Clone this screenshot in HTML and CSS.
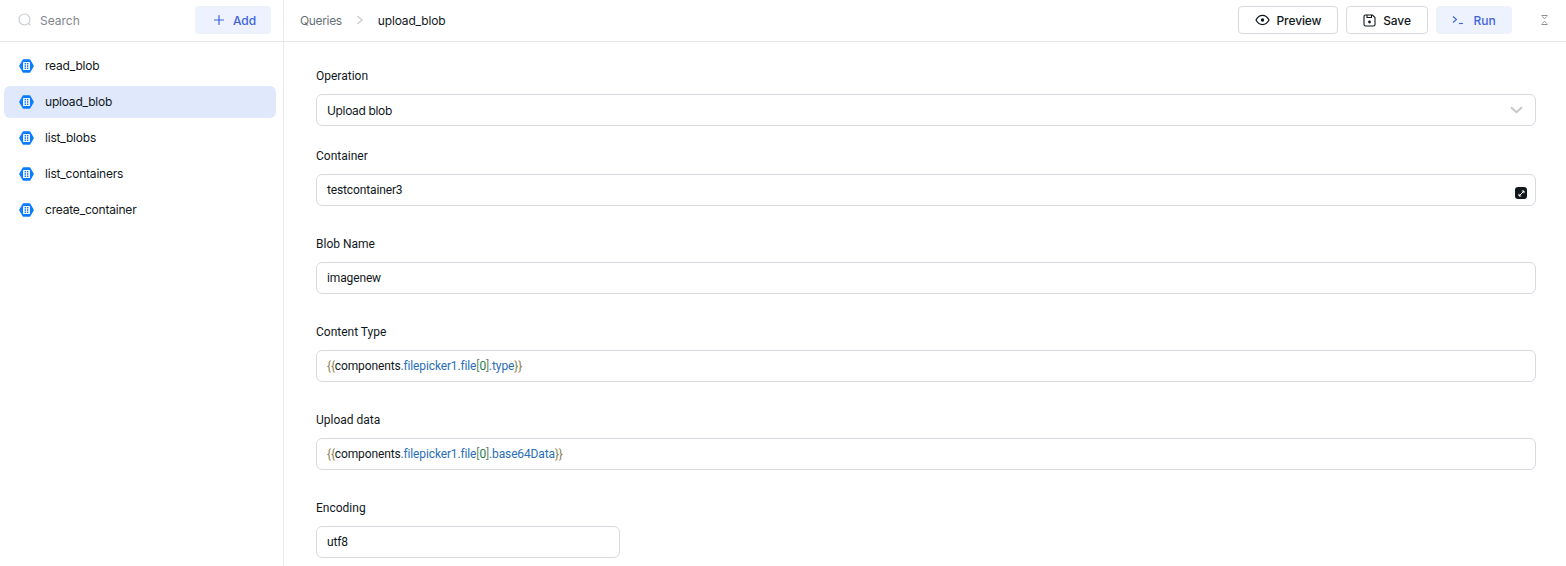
FILE: index.html
```html
<!DOCTYPE html>
<html lang="en">
<head>
<meta charset="utf-8">
<title>upload_blob</title>
<link rel="stylesheet" href="styles.css">
</head>
<body>
<div class="app">
  <aside class="sidebar">
    <div class="side-head">
      <div class="search">
        <svg class="search-icon" width="14" height="14" viewBox="0 0 14 14" fill="none"><circle cx="6.500" cy="6.500" r="5.500" stroke="#c7cdd1" stroke-width="1.200"/><path d="M10.400 10.400l2 2" stroke="#c7cdd1" stroke-width="1.200"/></svg>
        <span>Search</span>
      </div>
      <button class="btn btn-tint btn-add">
        <svg width="12" height="12" viewBox="0 0 12 12" fill="none"><path d="M6 1.500v9M1.500 6h9" stroke="#3e63dd" stroke-width="1.200" stroke-linecap="round"/></svg>
        <span>Add</span>
      </button>
    </div>
    <ul class="query-list">
      <li class="query"><svg class="hex" width="15" height="14" viewBox="0 0 15 14"><use href="#blob"/></svg><span>read_blob</span></li>
      <li class="query active"><svg class="hex" width="15" height="14" viewBox="0 0 15 14"><use href="#blob"/></svg><span>upload_blob</span></li>
      <li class="query"><svg class="hex" width="15" height="14" viewBox="0 0 15 14"><use href="#blob"/></svg><span>list_blobs</span></li>
      <li class="query"><svg class="hex" width="15" height="14" viewBox="0 0 15 14"><use href="#blob"/></svg><span>list_containers</span></li>
      <li class="query"><svg class="hex" width="15" height="14" viewBox="0 0 15 14"><use href="#blob"/></svg><span>create_container</span></li>
    </ul>
  </aside>
  <main class="main">
    <header class="topbar">
      <div class="crumbs">
        <span class="crumb-root">Queries</span>
        <svg width="8" height="10" viewBox="0 0 8 10" fill="none"><path d="M1.500 1l4.500 4-4.500 4" stroke="#c7cdd1" stroke-width="1.200"/></svg>
        <span class="crumb-leaf">upload_blob</span>
      </div>
      <div class="actions">
        <button class="btn btn-outline btn-preview">
          <svg width="15" height="12" viewBox="0 0 15 12" fill="none"><path d="M1 6c1.600-3 3.800-4.600 6.500-4.600S12.400 3 14 6c-1.600 3-3.800 4.600-6.500 4.600S2.600 9 1 6z" stroke="#11181c" stroke-width="1.200"/><circle cx="7.500" cy="6" r="1.700" fill="#11181c"/></svg>
          <span>Preview</span>
        </button>
        <button class="btn btn-outline btn-save">
          <svg width="13" height="13" viewBox="0 0 13 13" fill="none"><path d="M1 2.500A1.500 1.500 0 0 1 2.500 1h7L12 3.500v7a1.500 1.500 0 0 1-1.500 1.500h-8A1.500 1.500 0 0 1 1 10.500z" stroke="#11181c" stroke-width="1.100"/><path d="M4 1v2.500h4.500V1" stroke="#11181c" stroke-width="1.100"/><circle cx="6.500" cy="8" r="1.400" fill="#11181c"/></svg>
          <span>Save</span>
        </button>
        <button class="btn btn-tint btn-run">
          <svg width="12" height="10" viewBox="0 0 12 10" fill="none"><path d="M1 1.500L4.500 4.500 1 7.500" stroke="#3e63dd" stroke-width="1.100"/><path d="M7 8.500h4" stroke="#3e63dd" stroke-width="1.100"/></svg>
          <span>Run</span>
        </button>
        <svg class="collapse" width="7" height="10" viewBox="0 0 7 10" fill="none"><path d="M0.500 0.500h6M1.200 1.500l2.300 2.300 2.300-2.300M0.500 9.500h6M1.200 8.500l2.300-2.300 2.300 2.300" stroke="#889096" stroke-width="1"/></svg>
      </div>
    </header>
    <section class="form">
      <div class="field">
        <label class="label">Operation</label>
        <div class="input select"><span>Upload blob</span><svg width="13" height="8" viewBox="0 0 13 8" fill="none"><path d="M1 1.200L6.500 6.200 12 1.200" stroke="#c4c8cb" stroke-width="2"/></svg></div>
      </div>
      <div class="field field-tight">
        <label class="label">Container</label>
        <div class="input code">testcontainer3<span class="fx"><svg width="7" height="7" viewBox="0 0 7 7" fill="none"><path d="M1 6l5-5M3.800 1H6v2.200M1 3.800V6h2.200" stroke="#fff" stroke-width="1"/></svg></span></div>
      </div>
      <div class="field">
        <label class="label">Blob Name</label>
        <div class="input code">imagenew</div>
      </div>
      <div class="field">
        <label class="label">Content Type</label>
        <div class="input code"><span class="br1">{{</span>components<span class="prop">.filepicker1.file</span><span class="br2">[</span><span class="num">0</span><span class="br2">]</span><span class="prop">.type</span><span class="br1">}}</span></div>
      </div>
      <div class="field">
        <label class="label">Upload data</label>
        <div class="input code"><span class="br1">{{</span>components<span class="prop">.filepicker1.file</span><span class="br2">[</span><span class="num">0</span><span class="br2">]</span><span class="prop">.base64Data</span><span class="br1">}}</span></div>
      </div>
      <div class="field">
        <label class="label">Encoding</label>
        <div class="input code short">utf8</div>
      </div>
    </section>
  </main>
</div>
<svg class="defs" width="0" height="0">
  <symbol id="blob" viewBox="0 0 15 14">
    <path d="M4.500 1h6L14 7l-3.500 6h-6L1 7z" fill="#0a7cff" stroke="#0a7cff" stroke-width="1.600" stroke-linejoin="round"/>
    <rect x="4" y="3" width="7" height="8" rx="0.500" fill="#fff"/>
    <path d="M5.600 4h1.400v1.400H5.600zM8 4h1.400v1.400H8zM5.600 6.300h1.400v1.400H5.600zM8 6.300h1.400v1.400H8zM5.600 8.600h1.400v1.400H5.600zM8 8.600h1.400v1.400H8z" fill="#0a7cff"/>
  </symbol>
</svg>
</body>
</html>
```
FILE: styles.css
```css
* { box-sizing: border-box; }
html, body { margin: 0; height: 100%; overflow: hidden; background: #fff; }
body { font-family: "Inter", "Noto Sans", sans-serif; font-size: 12px; color: #11181c; }
.defs { position: absolute; }
.app { display: flex; height: 566px; }
.sidebar { width: 284px; flex: none; border-right: 1px solid #e6e8eb; }
.side-head { height: 42px; border-bottom: 1px solid #e6e8eb; display: flex; align-items: flex-start; justify-content: space-between; padding: 6px 12px 0 18px; }
.search { display: flex; align-items: center; gap: 8px; height: 28px; color: #7e868c; }
.btn { font: inherit; font-weight: 500; border-radius: 4px; height: 28px; display: flex; align-items: center; justify-content: center; padding: 0; cursor: pointer; }
.btn-tint { background: #edf2fe; border: 0; color: #3e63dd; }
.btn-outline { background: #fff; border: 1px solid #d7dbdf; color: #11181c; }
.btn-add { width: 76px; gap: 8px; padding-left: 3px; letter-spacing: -0.15px; }
.query-list { list-style: none; margin: 0; padding: 8px 7px 0 4px; display: flex; flex-direction: column; gap: 4px; }
.query { height: 32px; border-radius: 6px; display: flex; align-items: center; gap: 11px; padding: 0 0 1px 15px; letter-spacing: -0.2px; }
.query.active { background: #e0e8fb; }
.hex { flex: none; margin-top: 1px; }
.main { flex: 1; min-width: 0; }
.topbar { height: 42px; border-bottom: 1px solid #e6e8eb; display: flex; justify-content: space-between; align-items: flex-start; padding: 6px 18px 0 16px; }
.crumbs { display: flex; align-items: center; gap: 14px; height: 28px; letter-spacing: -0.15px; }
.crumb-root { color: #687076; letter-spacing: -0.35px; }
.actions { display: flex; align-items: center; gap: 8px; height: 28px; }
.btn-preview { width: 100px; gap: 7px; letter-spacing: -0.1px; }
.btn-save { width: 82px; gap: 7px; letter-spacing: -0.1px; }
.btn-run { width: 76px; gap: 9px; }
.collapse { margin-left: 21px; }
.form { padding: 24px 30px 0 32px; display: flex; flex-direction: column; gap: 28px; }
.field { display: flex; flex-direction: column; gap: 8px; }
.form .field:first-child { margin-bottom: -8px; }
.label { height: 20px; line-height: 20px; font-family: "Roboto", sans-serif; font-size: 12px; color: #11181c; }
.input { height: 32px; border: 1px solid #d7dbdf; border-radius: 6px; padding: 0 10px; display: flex; align-items: center; position: relative; font-size: 12px; background: #fff; }
.select { justify-content: space-between; padding-right: 12px; letter-spacing: -0.35px; }
.fx { position: absolute; right: 8px; top: 12px; width: 12px; height: 12px; border-radius: 3px; background: #11181c; display: flex; align-items: center; justify-content: center; }
.short { width: 304px; }
.code { font-family: "Roboto", sans-serif; white-space: pre; letter-spacing: -0.135px; }
.br1 { color: #8a8455; }
.prop { color: #2a6fb5; }
.br2 { color: #6b8f6b; }
.num { color: #1d7a4f; }
```
